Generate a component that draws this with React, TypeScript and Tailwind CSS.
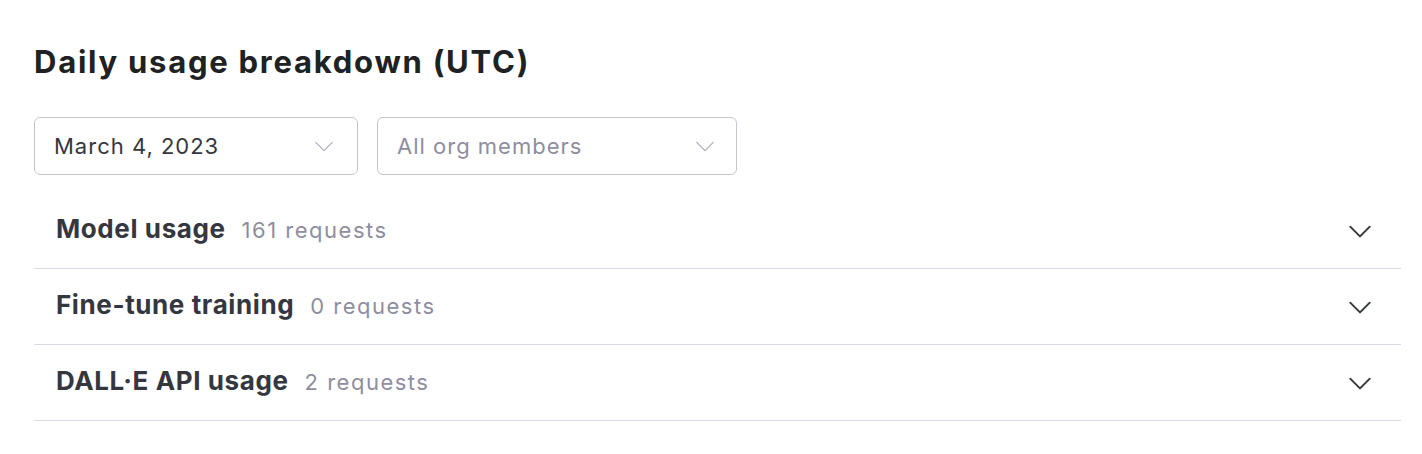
import React from 'react';

const Chevron = ({ className }: { className?: string }) => (
  <svg viewBox="0 0 24 24" fill="none" stroke="currentColor" strokeLinecap="round" strokeLinejoin="round" className={className}>
    <path d="M3 8l9 9 9-9" />
  </svg>
);

const rows = [
  { label: 'Model usage', count: '161 requests' },
  { label: 'Fine-tune training', count: '0 requests' },
  { label: 'DALL·E API usage', count: '2 requests' },
];

export default function App() {
  return (
    <div className="min-h-screen bg-white px-[34px] pt-[44px] pr-[21px]" style={{ fontFamily: 'Inter, "Noto Sans", sans-serif' }}>
      <h1 className="text-[31px] leading-[36px] font-bold text-[#202123] tracking-[1.75px]">Daily usage breakdown (UTC)</h1>

      <div className="mt-[37px] flex gap-[19px]">
        <div className="flex h-[58px] w-[324px] items-center justify-between rounded-[6px] border border-[#c5c5d2] pl-[19px] pr-[22px]">
          <span className="text-[22px] tracking-[1px] text-[#353740]">March 4, 2023</span>
          <Chevron className="h-[22px] w-[22px] text-[#acacbe] [stroke-width:1.3]" />
        </div>
        <div className="flex h-[58px] w-[360px] items-center justify-between rounded-[6px] border border-[#c5c5d2] pl-[19px] pr-[20px]">
          <span className="text-[22px] tracking-[1px] text-[#8e8ea0]">All org members</span>
          <Chevron className="h-[22px] w-[22px] text-[#acacbe] [stroke-width:1.3]" />
        </div>
      </div>

      <div className="mt-[18px]">
        {rows.map((r) => (
          <div key={r.label} className="flex h-[76px] items-center justify-between border-b border-[#d9d9e3] pl-[22px] pr-[28px]">
            <div className="flex items-baseline gap-[16px] pb-[4px]">
              <span className="text-[26px] font-bold tracking-[0.6px] text-[#353740]">{r.label}</span>
              <span className="text-[22px] tracking-[1.5px] text-[#8e8ea0]">{r.count}</span>
            </div>
            <Chevron className="h-[26px] w-[26px] text-[#353740] [stroke-width:1.8]" />
          </div>
        ))}
      </div>
    </div>
  );
}
